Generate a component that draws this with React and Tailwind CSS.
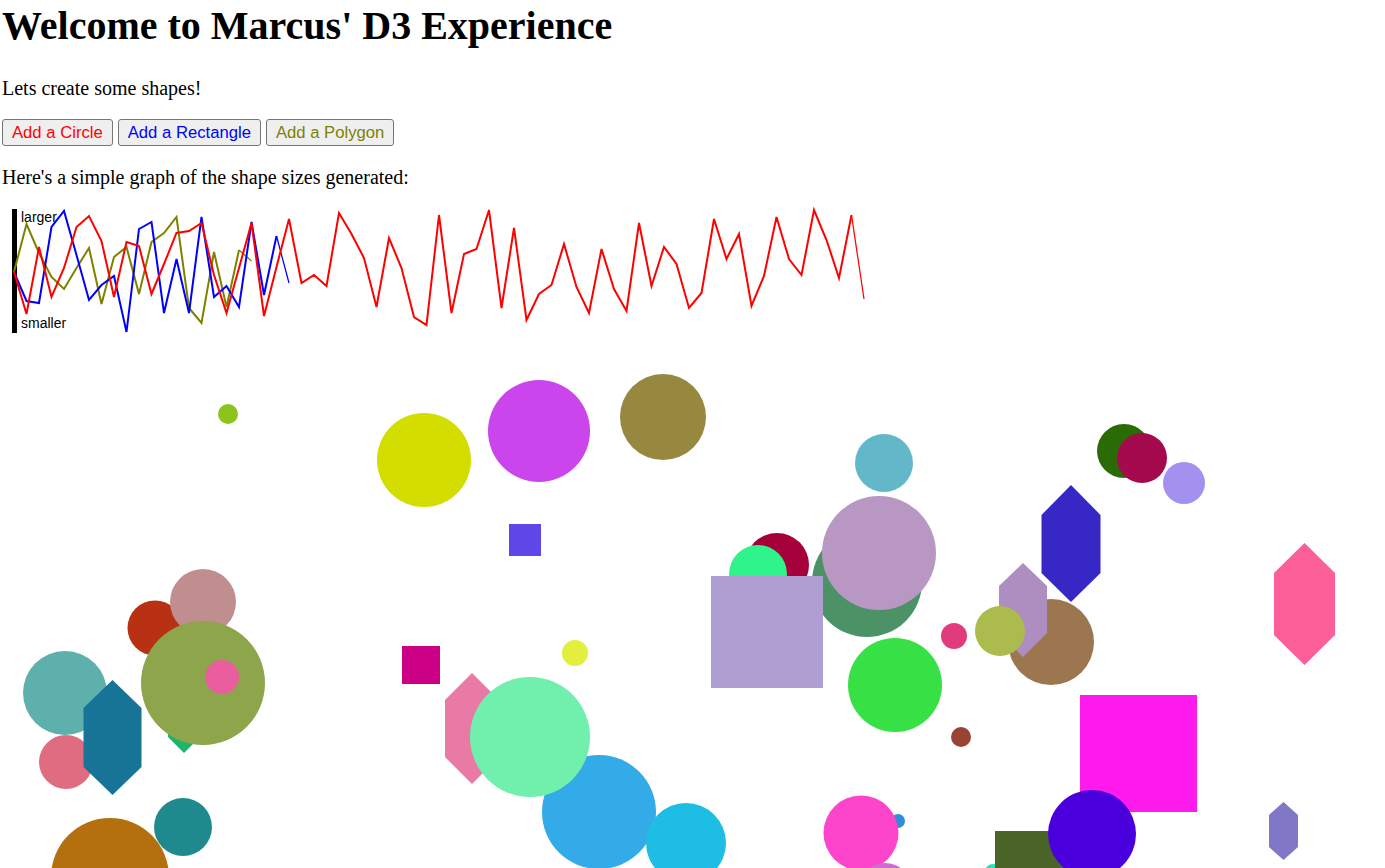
const xs = (i) => 14 + 12.5 * i;

const red = [272,314,247,297,268,227,216,241,297,242,246,294,264,233,231,223,275,313,268,223,316,267,219,283,275,286,213,234,258,307,238,268,317,325,215,313,254,249,210,308,228,320,294,285,244,287,313,249,289,311,223,286,247,264,308,293,219,259,234,306,276,217,259,275,210,240,278,215,299];
const blue = [272,301,303,227,211,255,300,285,276,332,229,222,313,259,313,217,297,286,307,222,295,236,283];
const olive = [272,224,253,277,289,268,248,304,257,247,294,242,233,217,308,323,252,307,250,261];

function Line({ data, color }) {
  const pts = data.map((y, i) => `${xs(i)},${y}`);
  const n = data.length;
  return (
    <g fill="none" stroke={color} strokeLinejoin="miter">
      <polyline points={pts.slice(0, n - 1).join(' ')} strokeWidth={2} />
      <polyline points={pts.slice(n - 2).join(' ')} strokeWidth={1.25} />
    </g>
  );
}

function hex(cx, top, w, c1, c2, bottom) {
  return `${cx},${top} ${cx + w},${c1} ${cx + w},${c2} ${cx},${bottom} ${cx - w},${c2} ${cx - w},${c1}`;
}

// shapes in paint order
const shapes = [
  { t: 'c', x: 228, y: 414, r: 10, f: '#8cc41c' },
  { t: 'c', x: 424, y: 460, r: 47, f: '#d3dd00' },
  { t: 'c', x: 539, y: 431, r: 51, f: '#cb45ec' },
  { t: 'c', x: 663, y: 417, r: 43, f: '#978840' },
  { t: 'r', x: 509, y: 524, w: 32, h: 32, f: '#5f48ea' },
  { t: 'c', x: 884, y: 463, r: 29, f: '#62b8c8' },
  { t: 'c', x: 1124, y: 451, r: 27, f: '#2a6b05' },
  { t: 'c', x: 1142, y: 458, r: 25, f: '#a60a4e' },
  { t: 'c', x: 1184, y: 483, r: 21, f: '#a391f0' },
  { t: 'p', pts: hex(1071, 485, 29.5, 515, 573, 602), f: '#3727c5' },
  { t: 'p', pts: hex(1304.5, 543, 30.5, 573, 635, 665), f: '#fc5e98' },
  { t: 'p', pts: hex(1283.5, 802, 14.5, 815, 847, 860), f: '#8077c6' },

  { t: 'c', x: 777, y: 565, r: 32, f: '#a6003a' },
  { t: 'c', x: 758, y: 574, r: 29, f: '#2ff48b' },
  { t: 'c', x: 867, y: 582, r: 55, f: '#4b9367' },
  { t: 'r', x: 711, y: 576, w: 112, h: 112, f: '#ae9ed2' },
  { t: 'c', x: 879, y: 553, r: 57, f: '#b997c3' },
  { t: 'c', x: 895, y: 685, r: 47, f: '#36e045' },
  { t: 'c', x: 954, y: 636, r: 13, f: '#e03c7d' },
  { t: 'c', x: 1051, y: 642, r: 43, f: '#9c764f' },
  { t: 'p', pts: hex(1023, 563, 24, 586, 633, 657), f: '#ae8dc0' },
  { t: 'c', x: 1000, y: 631, r: 25, f: '#acbb4e' },
  { t: 'c', x: 961, y: 737, r: 10, f: '#9a4332' },

  { t: 'r', x: 1080, y: 695, w: 117, h: 117, f: '#ff1aee' },
  { t: 'c', x: 993, y: 872, r: 8, f: '#2fe0b0' },
  { t: 'r', x: 995, y: 831, w: 70, h: 60, f: '#4b6529' },
  { t: 'c', x: 1092, y: 834, r: 44, f: '#4a00dc' },
  { t: 'c', x: 898, y: 821, r: 7, f: '#2e8fd6' },
  { t: 'c', x: 861, y: 833, r: 37.5, f: '#fc45cb' },
  { t: 'c', x: 885, y: 890, r: 27, f: '#d06ad0' },

  { t: 'c', x: 155, y: 628, r: 27.5, f: '#b83112' },
  { t: 'c', x: 203, y: 602, r: 33, f: '#c08e8f' },
  { t: 'c', x: 65, y: 693, r: 42, f: '#5db0ab' },
  { t: 'c', x: 66, y: 762, r: 27, f: '#df6c80' },
  { t: 'p', pts: hex(112.5, 680, 29, 708, 767, 795), f: '#177497' },
  { t: 'p', pts: hex(184, 690, 16, 706, 737, 753), f: '#1db46c' },
  { t: 'c', x: 203, y: 683, r: 62, f: '#8ea64b' },
  { t: 'c', x: 222, y: 677, r: 17, f: '#e85e9f' },
  { t: 'c', x: 183, y: 827, r: 29, f: '#1f8a8e' },
  { t: 'c', x: 110, y: 877, r: 59, f: '#b46f0e' },

  { t: 'r', x: 402, y: 646, w: 38, h: 38, f: '#cc0087' },
  { t: 'c', x: 575, y: 653, r: 13, f: '#e3ef3f' },
  { t: 'p', pts: hex(472, 673, 27, 700, 757, 784), f: '#e979a5' },
  { t: 'c', x: 599, y: 812, r: 57, f: '#32abe8' },
  { t: 'c', x: 530, y: 737, r: 60, f: '#71f0ad' },
  { t: 'c', x: 686, y: 843, r: 40, f: '#1ebee4' },
];

function Shape({ s }) {
  if (s.t === 'c') return <circle cx={s.x} cy={s.y} r={s.r} fill={s.f} />;
  if (s.t === 'r') return <rect x={s.x} y={s.y} width={s.w} height={s.h} fill={s.f} />;
  return <polygon points={s.pts} fill={s.f} />;
}

function AddButton({ label, color }) {
  return (
    <button
      className={`h-[27px] px-[9px] bg-[#efefef] border border-[#767676] rounded-[3px] text-[16.67px] leading-[19px] font-['Liberation_Sans',Arial,sans-serif] ${color}`}
    >
      {label}
    </button>
  );
}

export default function App() {
  return (
    <div className="h-[868px] overflow-hidden bg-white text-black font-['Liberation_Serif','Times_New_Roman',serif]">
      <h1 className="pt-[3px] pl-[2px] text-[40px] leading-[46px] font-bold">Welcome to Marcus' D3 Experience</h1>
      <p className="mt-[28px] pl-[2px] text-[20px] leading-[23px]">Lets create some shapes!</p>
      <div className="mt-[19px] pl-[2px] flex gap-[5px]">
        <AddButton label="Add a Circle" color="text-[#ff0000]" />
        <AddButton label="Add a Rectangle" color="text-[#0000ff]" />
        <AddButton label="Add a Polygon" color="text-[#808000]" />
      </div>
      <p className="mt-[20px] pl-[2px] text-[20px] leading-[23px]">Here's a simple graph of the shape sizes generated:</p>

      <svg className="block mt-[11px]" width="880" height="140" viewBox="0 200 880 140">
        <rect x="12" y="209" width="5" height="124" fill="#000" />
        <text x="21" y="222" fontSize="14" fontFamily="'Liberation Sans', Arial, sans-serif" fill="#000">larger</text>
        <text x="21" y="328" fontSize="14" fontFamily="'Liberation Sans', Arial, sans-serif" fill="#000">smaller</text>
        <Line data={olive} color="#808000" />
        <Line data={blue} color="#0000ff" />
        <Line data={red} color="#ff0000" />
      </svg>

      <svg className="block" width="1385" height="528" viewBox="0 340 1385 528">
        {shapes.map((s, i) => (
          <Shape key={i} s={s} />
        ))}
      </svg>
    </div>
  );
}
